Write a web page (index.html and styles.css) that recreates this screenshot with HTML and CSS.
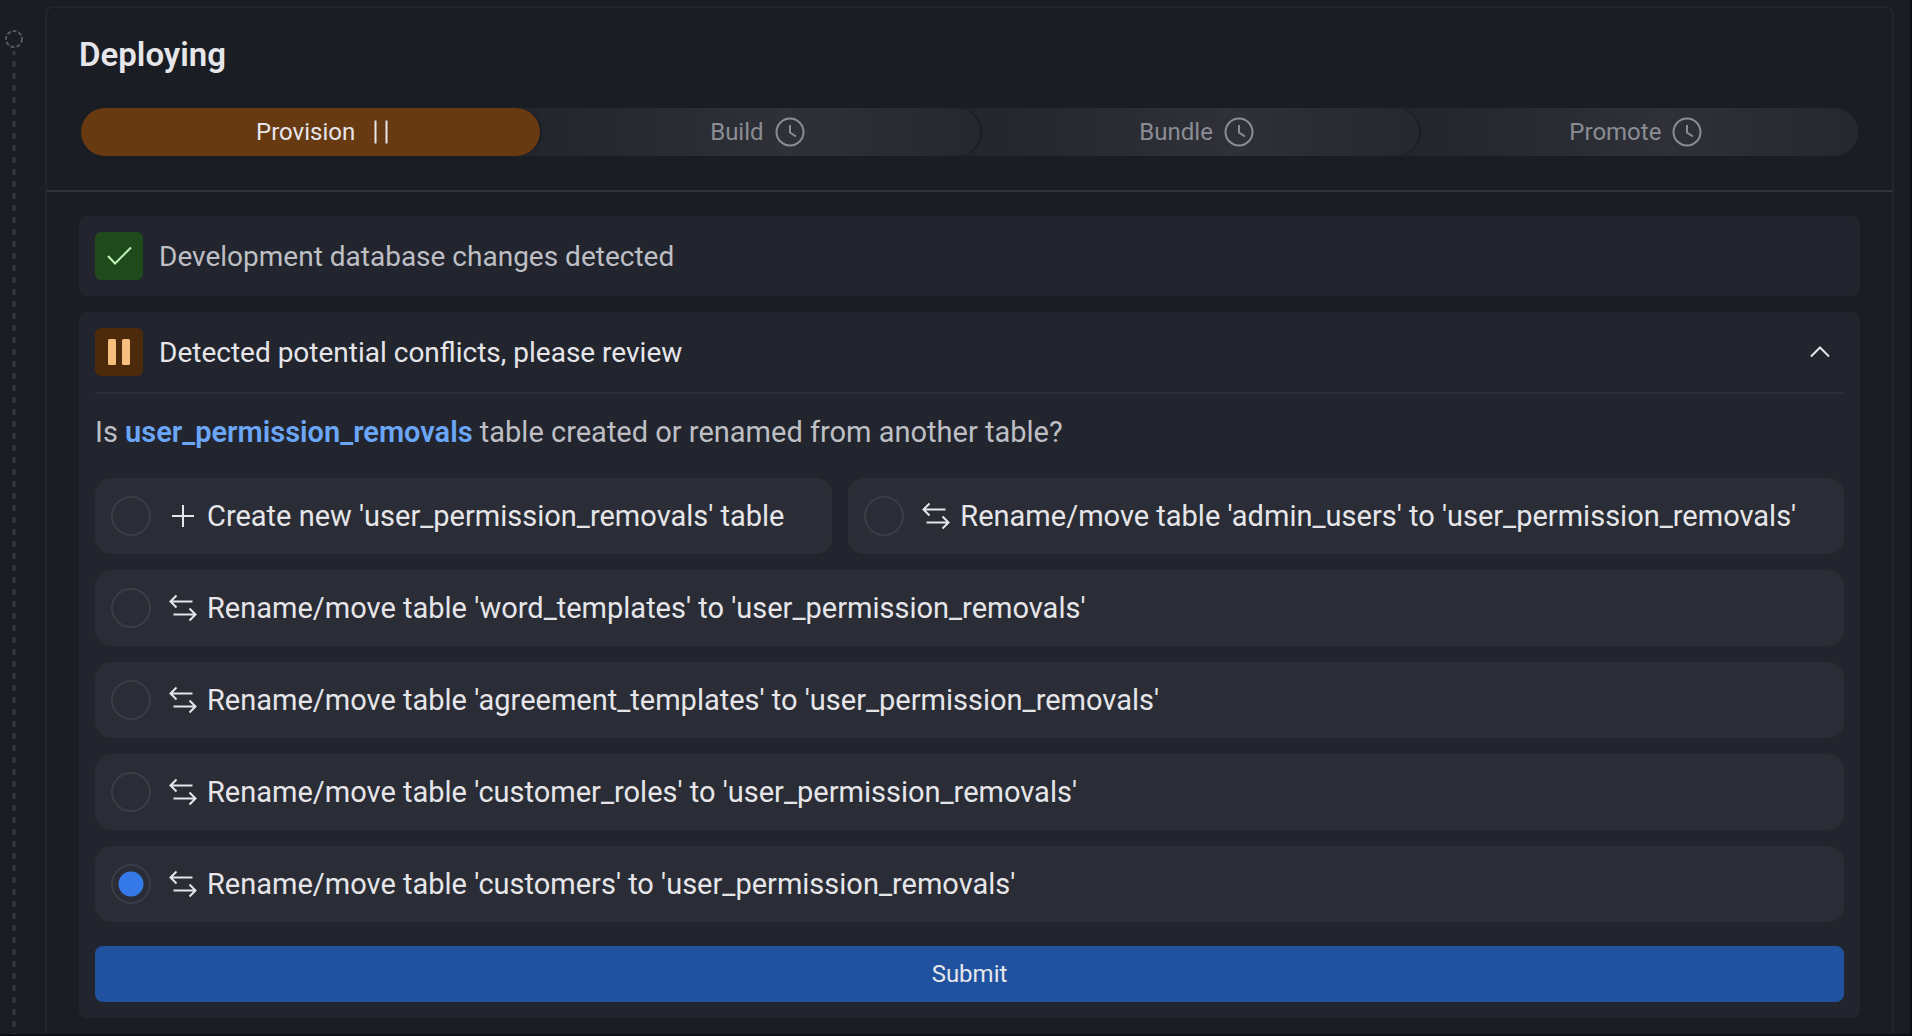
FILE: index.html
```html
<!DOCTYPE html>
<html lang="en">
<head>
<meta charset="utf-8">
<title>Deploying</title>
<link rel="stylesheet" href="styles.css">
</head>
<body>
<svg class="sprite" aria-hidden="true">
  <symbol id="swap" viewBox="0 0 32 32"><path d="M25.500 9.500H3.500M9.500 3.500l-6 6 6 6M6.500 22.500h22M22.500 16.500l6 6-6 6"/></symbol>
  <symbol id="clock" viewBox="0 0 32 32"><circle cx="16" cy="16" r="13.500"/><path d="M16 9v7.500l6 4"/></symbol>
</svg>
<div class="layout">
  <div class="timeline" aria-hidden="true">
    <svg class="node" viewBox="0 0 20 20"><circle cx="10" cy="10" r="8"/></svg>
    <svg class="rail"><line x1="2" y1="0" x2="2" y2="100%"/></svg>
  </div>
  <main class="panel">
    <header class="panel-head">
      <h1>Deploying</h1>
      <ol class="steps">
        <li class="step active">Provision <svg class="icon" viewBox="0 0 32 32"><path d="M10.500 4.500v23M21.500 4.500v23"/></svg></li>
        <li class="step">Build <svg class="icon"><use href="#clock"/></svg></li>
        <li class="step">Bundle <svg class="icon"><use href="#clock"/></svg></li>
        <li class="step">Promote <svg class="icon"><use href="#clock"/></svg></li>
      </ol>
    </header>
    <div class="panel-body">
      <section class="card">
        <div class="card-head done">
          <span class="badge ok"><svg class="badge-icon" viewBox="0 0 48 48"><path d="M13 24l7 7.500 16-16"/></svg></span>
          <h2>Development database changes detected</h2>
        </div>
      </section>
      <section class="card">
        <div class="card-head review">
          <span class="badge wait"><svg class="badge-icon" viewBox="0 0 48 48"><rect x="13" y="11" width="8" height="26" rx="1.500"/><rect x="27" y="11" width="8" height="26" rx="1.500"/></svg></span>
          <h2>Detected potential conflicts, please review</h2>
          <button class="toggle" type="button" aria-label="Collapse"><svg class="icon" viewBox="0 0 32 32"><path d="M7 20.500l9-9 9 9"/></svg></button>
        </div>
        <form class="conflict">
          <p class="question" id="question">Is <strong>user_permission_removals</strong> table created or renamed from another table?</p>
          <div class="options" role="radiogroup" aria-labelledby="question">
            <label class="option"><input type="radio" name="source"><svg class="icon" viewBox="0 0 32 32"><path d="M16 5v22M5 16h22"/></svg><span>Create new 'user_permission_removals' table</span></label>
            <label class="option"><input type="radio" name="source"><svg class="icon"><use href="#swap"/></svg><span>Rename/move table 'admin_users' to 'user_permission_removals'</span></label>
            <label class="option"><input type="radio" name="source"><svg class="icon"><use href="#swap"/></svg><span>Rename/move table 'word_templates' to 'user_permission_removals'</span></label>
            <label class="option"><input type="radio" name="source"><svg class="icon"><use href="#swap"/></svg><span>Rename/move table 'agreement_templates' to 'user_permission_removals'</span></label>
            <label class="option"><input type="radio" name="source"><svg class="icon"><use href="#swap"/></svg><span>Rename/move table 'customer_roles' to 'user_permission_removals'</span></label>
            <label class="option"><input type="radio" name="source" checked><svg class="icon"><use href="#swap"/></svg><span>Rename/move table 'customers' to 'user_permission_removals'</span></label>
          </div>
          <button class="submit" type="button">Submit</button>
        </form>
      </section>
    </div>
  </main>
</div>
</body>
</html>
```
FILE: styles.css
```css
:root {
  --bg: #1a1d24;
  --card: #22252d;
  --raised: #2a2d35;
  --text: #e6e6ea;
  --muted: #bdbfc5;
}

* { box-sizing: border-box; }

body {
  margin: 0;
  background: var(--bg);
  color: var(--text);
  font: 28px/40px Roboto, sans-serif;
}

.sprite { display: none; }

.layout {
  display: flex;
  min-height: 100vh;
  padding-right: 16px;
  border: solid #0d0f14;
  border-width: 0 2px 2px 0;
}

.timeline {
  display: flex;
  flex-direction: column;
  align-items: center;
  gap: 2px;
  width: 28px;
  margin-right: 17px;
  padding-top: 29px;
}

.timeline svg { fill: none; stroke: #565860; stroke-width: 2; }
.timeline .node { width: 20px; height: 20px; stroke-dasharray: 4 2; }
.timeline .rail { width: 4px; height: 0; flex: 1; stroke: #363840; stroke-width: 3; stroke-dasharray: 6 6; stroke-dashoffset: 2; }

.panel {
  flex: 1;
  margin-top: 6px;
  border: 2px solid var(--card);
  border-bottom: 0;
  border-radius: 8px 8px 0 0;
}

.panel-head {
  padding: 27px 32px 34px;
  border-bottom: 2px solid #30333b;
}

h1 { margin: 0 0 33px; font-size: 33px; line-height: 40px; font-weight: 600; }
h2 { margin: 0; padding-top: 2px; font-size: 28px; font-weight: 400; }

.steps {
  display: flex;
  margin: 0;
  padding: 0 2px 0 22px;
  list-style: none;
  font-size: 24px;
}

.step {
  position: relative;
  display: flex;
  flex: 1 1 25%;
  align-items: center;
  justify-content: center;
  gap: 10px;
  height: 48px;
  margin-left: -20px;
  padding-left: 16px;
  border-radius: 24px;
  background: linear-gradient(90deg, #22252d, #2f3038 58%, #25282f);
  box-shadow: 2px 0 0 var(--bg);
  color: #8b8d95;
}

.step:nth-child(1) { z-index: 4; }
.step:nth-child(2) { z-index: 3; }
.step:nth-child(3) { z-index: 2; }
.step:nth-child(2), .step:nth-child(3), .step:nth-child(4) { border-radius: 0 24px 24px 0; }
.step.active { padding-left: 32px; background: #683a12; color: var(--text); }

.icon { flex: none; width: 32px; height: 32px; fill: none; stroke: currentColor; stroke-width: 2; }

.panel-body { display: flex; flex-direction: column; gap: 16px; padding: 24px 32px 16px; }

.card { padding: 16px; border-radius: 8px; background: var(--card); }
.card-head { display: flex; align-items: center; gap: 16px; }
.card-head.done { color: var(--muted); }
.card-head.review { padding-bottom: 16px; border-bottom: 2px solid var(--raised); }

.badge { width: 48px; height: 48px; border-radius: 6px; }
.badge-icon { display: block; width: 48px; height: 48px; }
.badge.ok { background: #1f4a1b; fill: none; stroke: #bdf5b5; stroke-width: 2; }
.badge.wait { background: #4c2a0c; fill: #f8be80; }

.toggle {
  display: flex;
  margin-left: auto;
  padding: 0 8px;
  border: 0;
  background: none;
  color: var(--text);
}

.question { margin: 0; padding: 18px 0 26px; color: var(--muted); font-size: 29px; }
.question strong { color: #6ba6f8; font-weight: 600; }

.options { display: flex; flex-wrap: wrap; gap: 16px; }

.option {
  display: flex;
  flex: 1 0 auto;
  align-items: center;
  height: 76px;
  padding: 0 16px;
  border-radius: 16px;
  background: var(--raised);
  font-size: 29px;
}

.option span { margin-left: 8px; }

.option input {
  appearance: none;
  width: 40px;
  height: 40px;
  margin: 0 16px 0 0;
  border: 2px solid #3a3c46;
  border-radius: 50%;
}

.option input:checked { background: radial-gradient(circle, #3578e8 12px, transparent 13px); }

.submit {
  display: block;
  width: 100%;
  height: 56px;
  margin-top: 24px;
  border: 0;
  border-radius: 8px;
  background: #2152a0;
  color: var(--text);
  font: inherit;
  font-size: 24px;
}
```
